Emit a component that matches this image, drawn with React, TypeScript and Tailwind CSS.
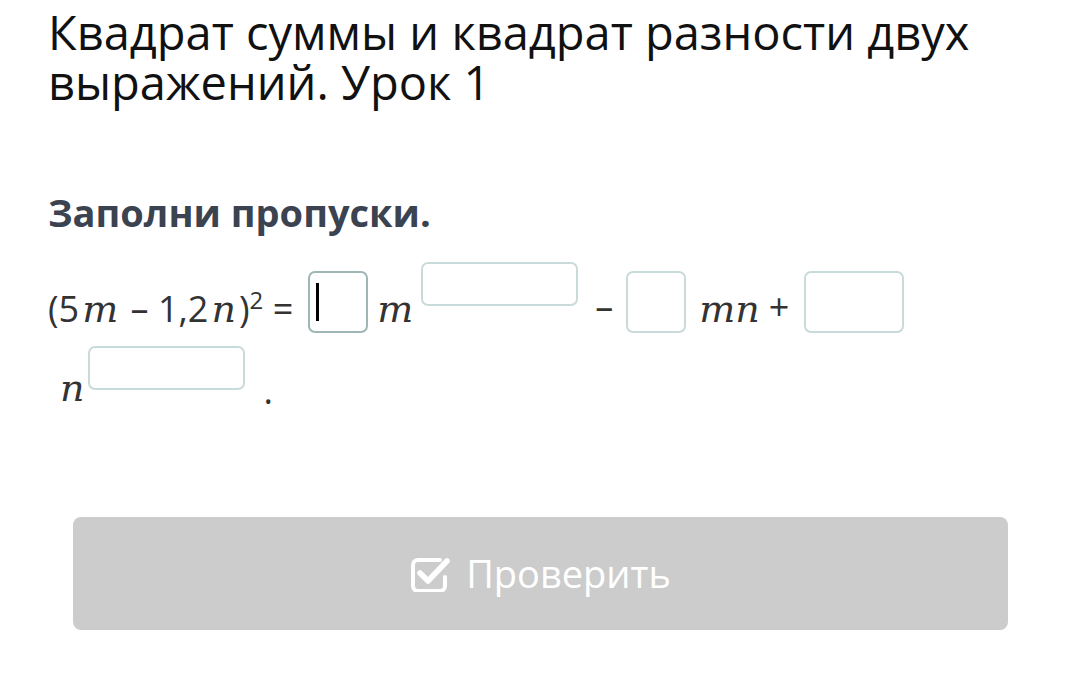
import React from 'react';

const math = { fontFamily: '"DejaVu Serif", "Liberation Serif", serif', fontStyle: 'italic' } as const;

function Box({ w, h, focused }: { w: number; h: number; focused?: boolean }) {
    return (
        <span
            className={`inline-flex items-center rounded-[7px] border-2 bg-white ${focused ? 'border-[#9fb6b7]' : 'border-[#c9dadb]'}`}
            style={{ width: w, height: h }}
        >
            {focused && <span className="ml-[6px] block h-[38px] w-[3px] bg-black" />}
        </span>
    );
}

function CheckIcon() {
    return (
        <svg width="40" height="36" viewBox="0 0 40 36" fill="none" className="shrink-0">
            <path
                d="M30 4 H8 a5 5 0 0 0 -5 5 v21 a5 5 0 0 0 5 5 h22 a5 5 0 0 0 5 -5 v-9"
                stroke="white"
                strokeWidth="4"
                strokeLinecap="round"
            />
            <path d="M10 17 L18 25 L37 5" stroke="white" strokeWidth="5.5" strokeLinecap="round" strokeLinejoin="round" />
        </svg>
    );
}

export default function App() {
    return (
        <div className="min-h-screen bg-white px-[48px] pt-[7px]" style={{ fontFamily: '"Open Sans", sans-serif' }}>
            <h1 className="text-[47px] leading-[50px] text-[#111]">
                Квадрат суммы и квадрат разности двух выражений. Урок 1
            </h1>

            <h2 className="mt-[85px] text-[38px] font-bold leading-[40px] text-[#3b4250]">Заполни пропуски.</h2>

            <div className="mt-[30px] text-[36px] leading-[40px] text-[#333]">
                {/* row 1 */}
                <div className="flex items-start">
                    <span className="mt-[27px] whitespace-nowrap">
                        (5<span className="mx-[3px] text-[38px]" style={math}>m</span> – 1,2<span className="mx-[3px] text-[38px]" style={math}>n</span>)
                        <span className="relative top-[-13px] text-[24px] leading-none">2</span>{' '}=
                    </span>
                    <span className="ml-[15px] mt-[9px]"><Box w={60} h={62} focused /></span>
                    <span className="ml-[9px] mt-[27px] text-[38px]" style={math}>m</span>
                    <span className="ml-[8px]"><Box w={157} h={44} /></span>
                    <span className="ml-[17px] mt-[25px]">–</span>
                    <span className="ml-[13px] mt-[9px]"><Box w={60} h={62} /></span>
                    <span className="ml-[13px] mt-[27px] text-[38px]" style={math}>mn</span>
                    <span className="ml-[9px] mt-[25px]">+</span>
                    <span className="ml-[15px] mt-[9px]"><Box w={100} h={62} /></span>
                </div>
                {/* row 2 */}
                <div className="mt-[6px] flex items-start">
                    <span className="ml-[12px] mt-[22px] text-[38px]" style={math}>n</span>
                    <span className="ml-[4px]"><Box w={157} h={44} /></span>
                    <span className="ml-[18px] mt-[25px]">.</span>
                </div>
            </div>

            <div className="ml-[25px] mr-[24px] mt-[106px]">
                <button className="flex h-[113px] w-full items-center justify-center gap-[16px] rounded-[8px] bg-[#cccccc] text-[38px] text-white">
                    <CheckIcon />
                    <span>Проверить</span>
                </button>
            </div>
        </div>
    );
}
